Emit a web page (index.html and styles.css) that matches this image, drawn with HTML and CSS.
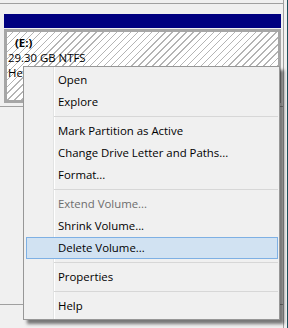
FILE: index.html
```html
<!DOCTYPE html>
<html>
<head>
<meta charset="utf-8">
<link rel="stylesheet" href="styles.css">
</head>
<body>
<div class="window">
  <div class="pane">
    <div class="top-row"></div>
    <div class="disk-row">
      <div class="disk-bar"></div>
      <div class="partition">
        <div class="vol-name">(E:)</div>
        <div class="vol-line">29.30 GB NTFS</div>
        <div class="vol-line">Healthy (Primary Partition)</div>
      </div>
    </div>
    <div class="empty-row"></div>
    <div class="bottom-row"></div>
  </div>
  <div class="gap"></div>
  <div class="edge"></div>
</div>

<div class="menu">
  <div class="item">Open</div>
  <div class="item">Explore</div>
  <div class="sep"></div>
  <div class="item">Mark Partition as Active</div>
  <div class="item">Change Drive Letter and Paths...</div>
  <div class="item">Format...</div>
  <div class="sep"></div>
  <div class="item disabled">Extend Volume...</div>
  <div class="item">Shrink Volume...</div>
  <div class="item active">Delete Volume...</div>
  <div class="sep"></div>
  <div class="item">Properties</div>
  <div class="sep"></div>
  <div class="item">Help</div>
</div>
</body>
</html>
```

FILE: styles.css
```css
html, body {
  margin: 0;
  padding: 0;
}
body {
  width: 288px;
  height: 328px;
  overflow: hidden;
  background: #f0f0f0;
  font-family: "Open Sans", "Liberation Sans", sans-serif;
  font-size: 11.4px;
  color: #000;
  position: relative;
}
.window {
  display: flex;
  height: 328px;
}
.pane {
  width: 283px;
  border-right: 1px solid #a0a0a0;
  display: flex;
  flex-direction: column;
}
.gap {
  width: 3px;
}
.edge {
  width: 1px;
  background: #1c4f5c;
}
.top-row {
  height: 3px;
  border-bottom: 1px solid #a0a0a0;
}
.disk-row {
  padding: 10px 3px 3px 4px;
  border-bottom: 1px solid #a0a0a0;
  display: flex;
  flex-direction: column;
  gap: 1px;
}
.disk-bar {
  height: 14px;
  width: 277px;
  background: #000080;
}
.partition {
  width: 277px;
  height: 74px;
  box-sizing: border-box;
  border: 3px solid #a6a6a6;
  background-color: #ffffff;
  background-image: repeating-linear-gradient(135deg, #ffffff 0px, #ffffff 3.9px, #b4b4b4 3.9px, #b4b4b4 4.9px);
  padding: 3px 0 0 1px;
  line-height: 15px;
  overflow: hidden;
}
.vol-name {
  font-weight: bold;
  padding-left: 7px;
}
.vol-line {
  white-space: nowrap;
}
.empty-row {
  height: 197px;
  border-bottom: 1px solid #a0a0a0;
}
.bottom-row {
  flex: 1;
}
.menu {
  position: absolute;
  left: 23px;
  top: 66px;
  width: 257px;
  height: 254px;
  box-sizing: border-box;
  border: 1px solid #979797;
  background: #f0f0f0;
  padding: 2px 1px 2px 2px;
  box-shadow: 4px 4px 3px rgba(0, 0, 0, 0.5);
}
.menu::before {
  content: "";
  position: absolute;
  top: 0;
  bottom: 0;
  left: 29px;
  width: 1px;
  background: #e2e3e3;
  border-right: 1px solid #ffffff;
}
.item {
  position: relative;
  height: 22px;
  box-sizing: border-box;
  border: 1px solid transparent;
  line-height: 20px;
  padding-left: 31px;
  white-space: nowrap;
}
.item.disabled {
  color: #6d6d6d;
}
.item.active {
  background: #d1e2f2;
  border-color: #7eb0e4;
}
.sep {
  position: relative;
  height: 7px;
  margin-left: 28px;
}
.sep::after {
  content: "";
  position: absolute;
  left: 0;
  right: 0;
  top: 3px;
  height: 1px;
  background: #d7d7d7;
}
```
